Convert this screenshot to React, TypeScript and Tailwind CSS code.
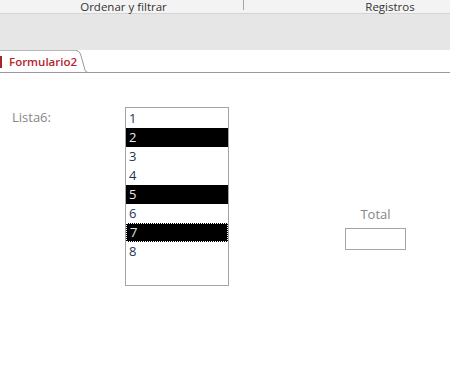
import React from "react";

const ITEMS = ["1", "2", "3", "4", "5", "6", "7", "8"];
const SELECTED = new Set(["2", "5", "7"]);

export default function App() {
  return (
    <div className="h-[373px] w-[450px] overflow-hidden bg-white" style={{ fontFamily: '"Open Sans", "Liberation Sans", sans-serif' }}>
      {/* ribbon group captions */}
      <div className="flex h-[14px] items-start border-b border-[#d4d4d4] bg-[#f3f3f3] text-[11.5px] leading-[13px] text-[#333]">
        <div className="flex w-[243px] justify-center pl-[4px]">Ordenar y filtrar</div>
        <div className="h-[10px] border-l border-[#a6a6a6]" />
        <div className="flex flex-1 justify-center pl-[86px]">Registros</div>
      </div>
      <div className="h-[36px] bg-[#e6e6e6]" />

      {/* document tab */}
      <div className="flex h-[23px] items-end border-b border-[#9a9a9a] bg-white">
        <div className="relative flex h-[22px] w-[77px] items-center border-t border-[#b5b5b5] bg-white pl-[9px]">
          <span className="absolute left-0 top-[5px] h-[12px] w-[2px] bg-[#a0282c]" />
          <span className="text-[11.5px] font-semibold text-[#b4252b]">Formulario2</span>
          <svg className="absolute left-[76px] top-[-1px]" width="12" height="23" viewBox="0 0 12 23">
            <path d="M0 0.5 Q3 0.5 4.5 4 L9 20 Q10 22.5 12 22.5" fill="white" stroke="#9a9a9a" strokeWidth="1" />
          </svg>
        </div>
      </div>

      {/* form body */}
      <div className="flex items-start pt-[34px]">
        <div className="w-[125px] pl-[12px] pt-[1px] text-[13px] text-[#868686]">Lista6:</div>
        <div className="h-[179px] w-[104px] border border-[#a5a5a5] bg-white pt-px">
          {ITEMS.map((it) => {
            const sel = SELECTED.has(it);
            const focus = it === "7";
            return (
              <div
                key={it}
                className={`flex h-[19px] items-center px-[3px] text-[13px] leading-none ${
                  sel ? "bg-black text-[#e8e8e8]" : "text-[#1d3557]"
                } ${focus ? "border border-dotted border-white" : ""}`}
              >
                {it}
              </div>
            );
          })}
        </div>
        <div className="ml-auto mr-[44px] mt-[98px] flex flex-col items-center">
          <div className="text-[13px] text-[#868686]">Total</div>
          <div className="mt-[3px] h-[22px] w-[61px] border border-[#a5a5a5] bg-white" />
        </div>
      </div>
    </div>
  );
}
